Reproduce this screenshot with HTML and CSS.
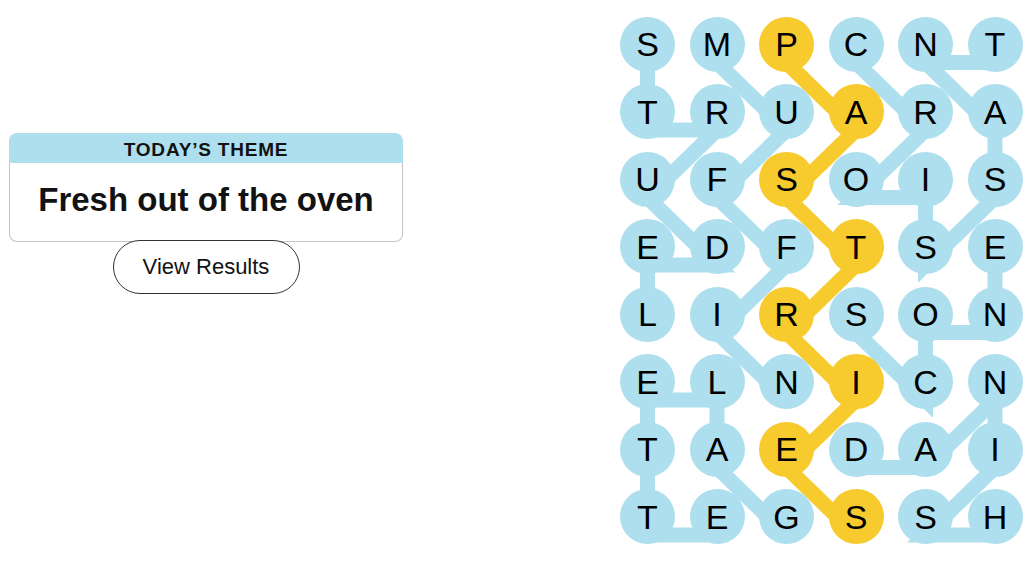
FILE: index.html
```html
<!DOCTYPE html>
<html lang="en">
<head>
<meta charset="utf-8">
<title>Strands</title>
<link rel="stylesheet" href="styles.css">
</head>
<body>
<main class="game">
  <section class="info">
    <div class="theme-card">
      <div class="theme-head">TODAY’S THEME</div>
      <div class="theme-body">Fresh out of the oven</div>
    </div>
    <button class="results-btn" type="button">View Results</button>
  </section>

  <section class="board">
    <svg class="paths" width="402.5" height="527.5" viewBox="0 0 402.5 527.5" aria-hidden="true">
      <g class="word">
        <polyline points="27.5,45.5 27.5,113 97,113 27.5,180.5 97,248 27.5,248 27.5,315.5"/>
        <polyline points="166.5,518 97,450.5 97,383 27.5,383 27.5,450.5 27.5,518 97,518"/>
        <polyline points="236,45.5 305.5,113 236,180.5 305.5,180.5 305.5,248 375,180.5 375,113 305.5,45.5 375,45.5"/>
        <polyline points="97,45.5 166.5,113 97,180.5 166.5,248 97,315.5 166.5,383"/>
        <polyline points="236,315.5 305.5,383 305.5,315.5 375,315.5 375,248"/>
        <polyline points="236,450.5 305.5,450.5 375,383 375,450.5 305.5,518 375,518"/>
      </g>
      <g class="spangram">
        <polyline points="166.5,45.5 236,113 166.5,180.5 236,248 166.5,315.5 236,383 166.5,450.5 236,518"/>
      </g>
    </svg>
    <div class="grid">
      <div class="cell">S</div><div class="cell">M</div><div class="cell span">P</div><div class="cell">C</div><div class="cell">N</div><div class="cell">T</div>
      <div class="cell">T</div><div class="cell">R</div><div class="cell">U</div><div class="cell span">A</div><div class="cell">R</div><div class="cell">A</div>
      <div class="cell">U</div><div class="cell">F</div><div class="cell span">S</div><div class="cell">O</div><div class="cell">I</div><div class="cell">S</div>
      <div class="cell">E</div><div class="cell">D</div><div class="cell">F</div><div class="cell span">T</div><div class="cell">S</div><div class="cell">E</div>
      <div class="cell">L</div><div class="cell">I</div><div class="cell span">R</div><div class="cell">S</div><div class="cell">O</div><div class="cell">N</div>
      <div class="cell">E</div><div class="cell">L</div><div class="cell">N</div><div class="cell span">I</div><div class="cell">C</div><div class="cell">N</div>
      <div class="cell">T</div><div class="cell">A</div><div class="cell span">E</div><div class="cell">D</div><div class="cell">A</div><div class="cell">I</div>
      <div class="cell">T</div><div class="cell">E</div><div class="cell">G</div><div class="cell span">S</div><div class="cell">S</div><div class="cell">H</div>
    </div>
  </section>
</main>
</body>
</html>
```

FILE: styles.css
```css
html, body {
  margin: 0;
  padding: 0;
  background: #ffffff;
}

body {
  font-family: "Liberation Sans", Arial, sans-serif;
  color: #121212;
}

.game {
  display: flex;
  justify-content: space-between;
  align-items: flex-start;
  padding: 16.5px 9.5px 0 9px;
}

.info {
  width: 394px;
  margin-top: 116.5px;
  display: flex;
  flex-direction: column;
  align-items: center;
}

.theme-card {
  width: 100%;
  box-sizing: border-box;
}

.theme-head {
  background: #aedfee;
  border-radius: 8px 8px 0 0;
  padding: 6px 0 2px;
  line-height: 22px;
  font-size: 19px;
  font-weight: 700;
  letter-spacing: 0.8px;
  text-align: center;
  color: #121212;
}

.theme-body {
  border: 1px solid #c4c4c4;
  border-top: none;
  border-radius: 0 0 8px 8px;
  padding: 18px 0 22px;
  line-height: 38px;
  font-size: 33px;
  font-weight: 700;
  text-align: center;
  color: #121212;
}

.results-btn {
  margin-top: -2.4px;
  width: 187px;
  height: 54px;
  box-sizing: border-box;
  border: 1px solid #333333;
  border-radius: 27px;
  background: #ffffff;
  font-family: "Liberation Sans", Arial, sans-serif;
  font-size: 22px;
  color: #121212;
  display: flex;
  align-items: center;
  justify-content: center;
  padding: 0;
}

.board {
  position: relative;
  width: 402.5px;
}

.paths {
  position: absolute;
  top: 0;
  left: 0;
  z-index: 0;
  overflow: visible;
}

.paths polyline {
  fill: none;
  stroke-width: 15;
  stroke-linejoin: miter;
  stroke-miterlimit: 4;
  stroke-linecap: butt;
}

.word polyline {
  stroke: #aedfee;
}

.spangram polyline {
  stroke: #f7cb2d;
}

.grid {
  position: relative;
  z-index: 1;
  display: grid;
  grid-template-columns: repeat(6, 55px);
  grid-auto-rows: 55px;
  column-gap: 14.5px;
  row-gap: 12.5px;
}

.cell {
  width: 55px;
  height: 55px;
  border-radius: 50%;
  background: #aedfee;
  display: flex;
  align-items: center;
  justify-content: center;
  font-size: 34px;
  line-height: 1;
  box-sizing: border-box;
  color: #000000;
}

.cell.span {
  background: #f7cb2d;
}
```
